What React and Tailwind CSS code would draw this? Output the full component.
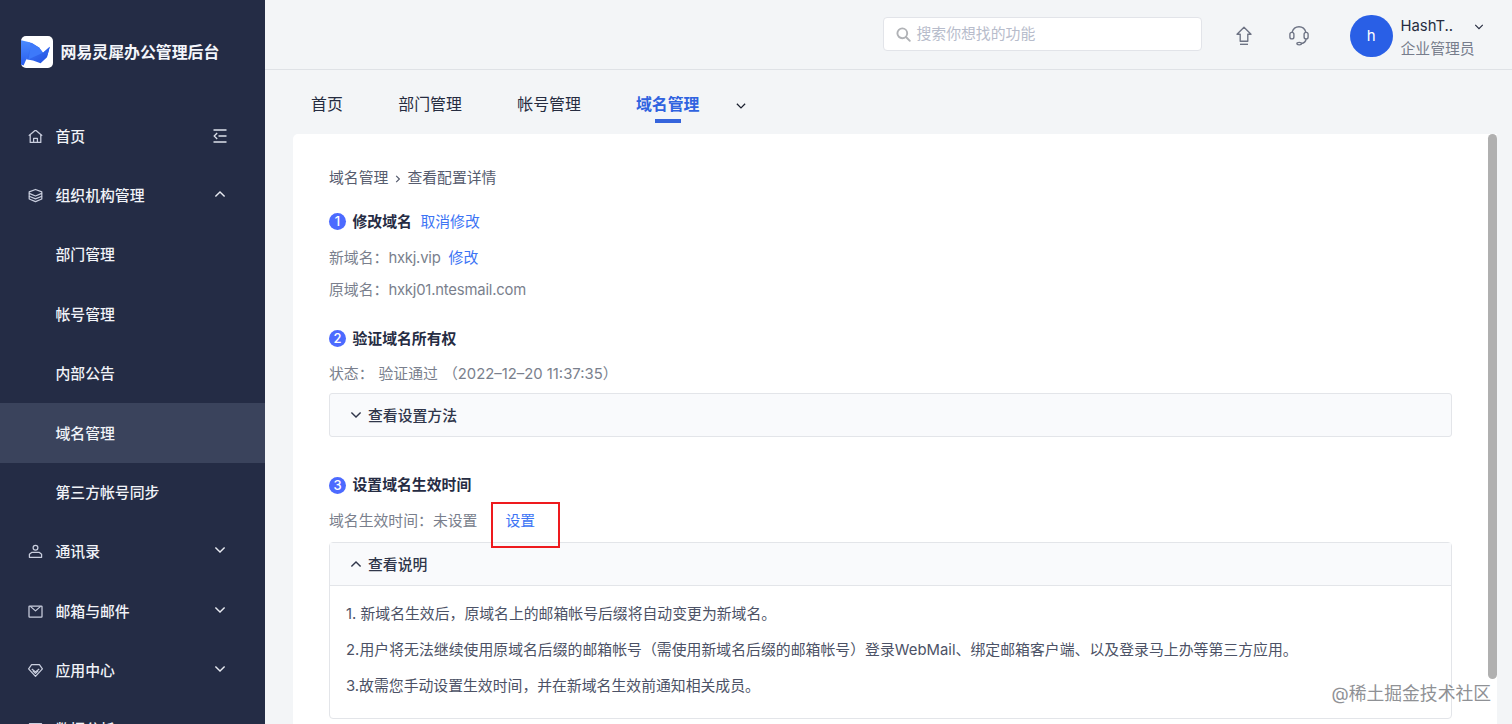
import React from "react";

function Chevron({ dir = "down", className = "" }) {
  return (
    <svg
      viewBox="0 0 12 8"
      className={"h-2 w-3 shrink-0 " + className}
      fill="none"
      stroke="currentColor"
      strokeWidth="1.4"
    >
      <path d={dir === "down" ? "M1.4 1.5 6 6.1 10.6 1.5" : "M1.4 6.5 6 1.9 10.6 6.5"} />
    </svg>
  );
}

function HomeIcon() {
  return (
    <>
      <path d="M.8 6.8 7 1.5h1l6.2 5.3" />
      <path d="M2.2 5.8v7.6h10.6V5.8" />
      <path d="M5.6 13.2V9.4h3.8v3.8" />
    </>
  );
}

function LayersIcon() {
  return (
    <>
      <path d="M7.5 1.5 13.8 3.9v1.5L7.5 8 1.2 5.4V3.9z" />
      <path d="M1.2 5.4v2.8l6.3 2.7 6.3-2.7V5.4" />
      <path d="M1.2 8.2V11l6.3 2.6 6.3-2.6V8.2" />
    </>
  );
}

function ContactIcon() {
  return (
    <>
      <circle cx="7.5" cy="3.7" r="2.4" />
      <path d="M3.6 8.4h7.8l2.2 1.8v3.1H1.4v-3.1z" />
    </>
  );
}

function MailIcon() {
  return (
    <>
      <rect x="1" y="2" width="13" height="11" rx="0.6" />
      <path d="M2.4 2.4 7.5 6.9l5.1-4.5" />
    </>
  );
}

function GemIcon() {
  return (
    <>
      <path d="M3.6 1.7h7.8l3 4.1-6.9 7.6L.6 5.8z" />
      <path d="M3.8 5.9l3.7 3 3.7-3" />
      <path d="M4.8 7.9 7.5 10.4l2.7-2.5" />
    </>
  );
}

function GridIcon() {
  return <rect x="1.5" y="1.5" width="12" height="12" />;
}

const menu = [
  { label: "首页", icon: HomeIcon, trail: "fold" },
  { label: "组织机构管理", icon: LayersIcon, trail: "up" },
  { label: "部门管理" },
  { label: "帐号管理" },
  { label: "内部公告" },
  { label: "域名管理", active: true },
  { label: "第三方帐号同步" },
  { label: "通讯录", icon: ContactIcon, trail: "down" },
  { label: "邮箱与邮件", icon: MailIcon, trail: "down" },
  { label: "应用中心", icon: GemIcon, trail: "down" },
  { label: "数据分析", icon: GridIcon, trail: "down" },
];

function MenuItem({ item }) {
  const Icon = item.icon;
  return (
    <li
      className={
        "flex h-[59.4px] shrink-0 items-center pl-[27.5px] pr-[36.5px] " +
        (item.active ? "bg-[#3a435c]" : "")
      }
    >
      <span className="flex w-[28px] shrink-0">
        {Icon && (
          <svg
            viewBox="0 0 15 15"
            className="size-[15px] text-[#c9cede]"
            fill="none"
            stroke="currentColor"
            strokeWidth="1.25"
            strokeLinejoin="round"
          >
            <Icon />
          </svg>
        )}
      </span>
      <span className="flex-1 pt-px text-[14.85px] font-medium leading-6 text-[#f1f3f8]">{item.label}</span>
      {item.trail === "fold" && (
        <svg
          viewBox="0 0 16 16"
          className="mr-px size-4 text-[#dde1ea]"
          fill="none"
          stroke="currentColor"
          strokeWidth="1.3"
        >
          <path d="M1.5 2h13M6.5 8h8M1.5 14h13M5.2 5 2.2 8l3 3" />
        </svg>
      )}
      {(item.trail === "up" || item.trail === "down") && (
        <Chevron dir={item.trail} className="mb-[3px] mr-[3px] text-[#e8ebf2]" />
      )}
    </li>
  );
}

function Sidebar() {
  return (
    <aside className="flex w-[265px] shrink-0 flex-col overflow-hidden bg-[#242c45]">
      <div className="flex h-[106.4px] shrink-0 items-start pl-[21px] pt-9">
        <svg viewBox="0 0 32 32" className="size-8 shrink-0">
          <defs>
            <linearGradient id="body" x1="0" y1="0" x2="1" y2="1">
              <stop offset="0" stopColor="#3f7dfb" />
              <stop offset="1" stopColor="#2350e0" />
            </linearGradient>
            <linearGradient id="ear" x1="0" y1="0" x2="0" y2="1">
              <stop offset="0" stopColor="#4a8bff" />
              <stop offset="1" stopColor="#2a5eee" />
            </linearGradient>
          </defs>
          <rect width="32" height="32" rx="5" fill="#fff" />
          <path d="M8 6.2 11 7l7 4.6 4 5.2 6.8-6-2.8 10.4-6.4 6-7.6-2.6L5 23.3z" fill="url(#body)" />
          <path d="M0 4.2 8.6 6.3 10 11 5.2 23.4 2.6 29.4 0 28.6z" fill="url(#ear)" />
          <path d="M10.2 7 18 11.6 22 16.8 7.6 23.2z" fill="#3d79fa" />
          <path d="M22 16.8 28.8 10.8 26.4 19.6z" fill="#2f62ec" />
        </svg>
        <h1 className="ml-[7.5px] mt-[5px] text-[15.9px] font-bold leading-6 text-[#f4f6fb]">网易灵犀办公管理后台</h1>
      </div>
      <ul className="flex flex-col">
        {menu.map((m) => (
          <MenuItem key={m.label} item={m} />
        ))}
      </ul>
    </aside>
  );
}

function Header() {
  return (
    <header className="flex h-[70px] shrink-0 items-start border-b border-[#dfe2e6] pl-[618px]">
      <div className="mt-[17px] flex h-[34px] w-[319px] shrink-0 items-center rounded border border-[#e2e4e9] bg-white pl-[11.5px]">
        <svg
          viewBox="0 0 15 15"
          className="size-[15px] shrink-0 text-[#b0b2b6]"
          fill="none"
          stroke="currentColor"
          strokeWidth="1.9"
          strokeLinecap="round"
        >
          <circle cx="6.3" cy="6.3" r="4.9" />
          <path d="m10 10 3.8 3.8" />
        </svg>
        <span className="ml-[6px] text-[14.85px] leading-6 text-[#b7bccb]">搜索你想找的功能</span>
      </div>
      <svg
        viewBox="0 0 18 20"
        className="ml-[33px] mt-[26px] h-5 w-[18px] shrink-0 text-[#6d7384]"
        fill="none"
        stroke="currentColor"
        strokeWidth="1.35"
        strokeLinejoin="round"
      >
        <path d="M9 1.2 16 8.2h-3.2v7H5.2v-7H2z" />
        <path d="M5 18.3h8" />
      </svg>
      <svg
        viewBox="0 0 22 22"
        className="ml-[35px] mt-[25px] size-[22px] shrink-0 text-[#6d7384]"
        fill="none"
        stroke="currentColor"
        strokeWidth="1.35"
      >
        <path d="M4 7.6C5 4 7.6 1.7 11 1.7S17 4 18 7.6" />
        <rect x="1.9" y="7.3" width="4" height="6.6" rx="2" />
        <rect x="16.1" y="7.3" width="4" height="6.6" rx="2" />
        <path d="M18.2 14c-.5 2.3-2.3 4.2-4.8 4.6" />
        <ellipse cx="11.2" cy="18.6" rx="2.3" ry="1.2" />
      </svg>
      <div className="ml-10 mt-[14.5px] flex size-[42.5px] shrink-0 items-center justify-center rounded-full bg-[#295fe6] text-[15px] text-white">
        h
      </div>
      <div className="ml-[8px] mt-[14px] w-[75px]">
        <div className="text-[14.85px] leading-6 text-[#262c40]">HashT..</div>
        <div className="text-[14.85px] leading-[22px] text-[#777d8c]">企业管理员</div>
      </div>
      <Chevron className="-ml-[3px] mt-[22.5px] scale-[.82] text-[#262c40]" />
    </header>
  );
}

function Tabs() {
  return (
    <nav className="flex h-16 shrink-0 items-start pl-[46px] pt-[22.5px] text-[15.9px] leading-6 text-[#262c40]">
      <span>首页</span>
      <span className="ml-[55.5px]">部门管理</span>
      <span className="ml-[55.5px]">帐号管理</span>
      <span className="ml-[55px] flex flex-col items-center font-bold text-[#3063e0]">
        域名管理
        <span className="mt-[2.5px] h-1 w-[26px] bg-[#3564dc]" />
      </span>
      <Chevron className="ml-9 mt-[9px] scale-90 text-[#1c2130]" />
    </nav>
  );
}

function StepTitle({ n, title, children, className }) {
  return (
    <div className={"flex h-6 items-center " + className}>
      <span className="flex size-[17px] items-center justify-center rounded-full bg-[#4c6aff] text-[13px] font-medium leading-none text-white">
        {n}
      </span>
      <h2 className="ml-[6.5px] font-bold text-[#262c43]">{title}</h2>
      {children}
    </div>
  );
}

function DomainPanel() {
  return (
    <section className="flex min-h-0 flex-1 overflow-hidden rounded-tl-[5px] bg-white">
      <div className="flex min-w-0 flex-1 flex-col pl-9 pr-9 pt-8 text-[14.85px] leading-6 text-[#7a7f8d]">
        <div className="flex h-6 items-center text-[#565c6e]">
          <span>域名管理</span>
          <svg
            viewBox="0 0 6 8"
            className="mx-[6.5px] mt-0.5 h-2 w-1.5"
            fill="none"
            stroke="currentColor"
            strokeWidth="1.2"
          >
            <path d="M1.2.8 4.4 4 1.2 7.2" />
          </svg>
          <span>查看配置详情</span>
        </div>

        <StepTitle n="1" title="修改域名" className="mt-[19.5px]">
          <a className="ml-[8.5px] text-[#3c74f5]">取消修改</a>
        </StepTitle>
        <p className="mt-[12.5px] h-6 whitespace-nowrap">
          新域名：<span className="tracking-[-0.22px]">hxkj.vip</span>
          <a className="ml-2 text-[#3c74f5]">修改</a>
        </p>
        <p className="mt-2 h-6 whitespace-nowrap">
          原域名：<span className="tracking-[-0.2px]">hxkj01.ntesmail.com</span>
        </p>

        <StepTitle n="2" title="验证域名所有权" className="mt-[24.5px]" />
        <p className="mt-[11.5px] flex h-6 whitespace-nowrap">
          <span>状态：</span>
          <span className="ml-[5px]">验证通过</span>
          <span className="ml-[5px]">（2022–12–20 11:37:35）</span>
        </p>
        <div className="mt-[7px] flex h-11 shrink-0 items-center rounded-[3px] border border-[#e3e5e9] bg-[#f9fafc] pl-5 font-medium text-[#30364a]">
          <Chevron className="mr-[6px]" />
          <span className="pt-px">查看设置方法</span>
        </div>

        <StepTitle n="3" title="设置域名生效时间" className="mt-9 shrink-0" />
        <p className="mt-3 flex h-6 shrink-0 whitespace-nowrap">
          <span>域名生效时间：未设置</span>
          <span className="relative ml-[28px] text-[#3c74f5]">
            设置
            <span className="absolute -left-[14px] -top-[7px] h-[46px] w-[69px] border-2 border-[#ee1a1e]" />
          </span>
        </p>
        <div className="mt-[9px] flex h-[177px] shrink-0 flex-col rounded-[4px] border border-[#e3e5e9]">
          <div className="flex h-[43px] shrink-0 items-center border-b border-[#e3e5e9] bg-[#f9fafc] pl-5 font-medium text-[#30364a]">
            <Chevron dir="up" className="mr-[6px]" />
            <span className="pt-px">查看说明</span>
          </div>
          <div className="flex flex-col gap-3 whitespace-nowrap pl-4 pt-4 text-[#4c5266]">
            <p>1. 新域名生效后，原域名上的邮箱帐号后缀将自动变更为新域名。</p>
            <p className="tracking-[0.03px]">
              2.用户将无法继续使用原域名后缀的邮箱帐号（需使用新域名后缀的邮箱帐号）登录WebMail、绑定邮箱客户端、以及登录马上办等第三方应用。
            </p>
            <p>3.故需您手动设置生效时间，并在新域名生效前通知相关成员。</p>
          </div>
        </div>
      </div>
      <div className="w-[9px] shrink-0">
        <div className="h-[545px] rounded-full bg-[#b0b0b0]" />
      </div>
    </section>
  );
}

export default function App() {
  return (
    <div
      lang="zh-CN"
      className="relative flex h-[724px] w-[1512px] overflow-hidden bg-[#f3f5f7] font-['Inter','Noto_Sans_CJK_SC',sans-serif]"
    >
      <Sidebar />
      <main className="flex min-w-0 flex-1 flex-col">
        <Header />
        <Tabs />
        <div className="flex min-h-0 flex-1 pl-[28px] pr-[15px]">
          <DomainPanel />
        </div>
      </main>
      <div className="absolute bottom-[18px] right-[21px] whitespace-nowrap text-[17.8px] leading-6 text-[#8f9195] [text-shadow:-1px_-1px_0_#fff]">
        @稀土掘金技术社区
      </div>
    </div>
  );
}
